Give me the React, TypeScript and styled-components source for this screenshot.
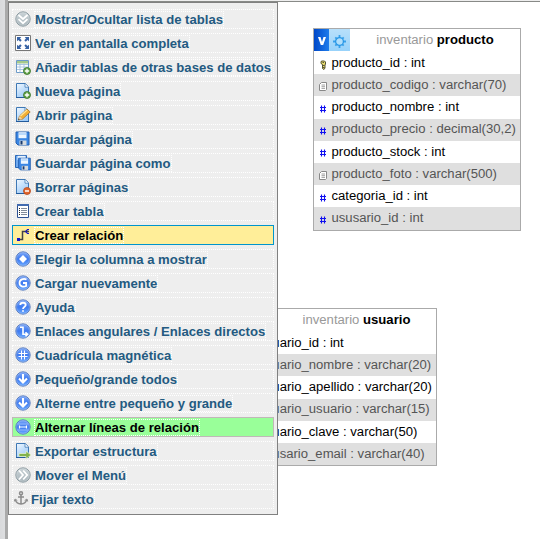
import React from 'react';
import styled, { createGlobalStyle, css } from 'styled-components';

const Global = createGlobalStyle`
  * { box-sizing: border-box; }
  body { margin: 0; background: #fff; overflow: hidden; }
`;

const Page = styled.div`
  display: grid;
  grid-template-columns: 5px 3px 1fr;
  width: 540px;
  height: 539px;
  font-family: "Liberation Sans", Arial, sans-serif;
`;
const NavEdge = styled.div`
  background: linear-gradient(90deg, #d9dadc, #dddee0);
`;
const Resizer = styled.div`
  background: #aaa;
`;
const Canvas = styled.main`
  position: relative;
  overflow: hidden;
  background: #fff;
  border-top: 1px solid #eee;
  box-shadow: inset 0 1px 0 #888a87;
`;
const Menu = styled.nav`
  position: absolute;
  left: 0;
  top: 1px;
  width: 270px;
  height: 513px;
  padding: 5px 3px 0;
  display: flex;
  flex-direction: column;
  gap: 4px;
  background: #eee;
  border: 1px solid #808080;
`;

type Tone = 'plain' | 'hover' | 'active';
const tones = {
  plain: css`border: 1px dotted #fff; color: #235a81;`,
  hover: css`border: 1px solid #0095cc; background: #ffee99; color: #000;`,
  active: css`border: 1px solid #c0b8b8; background: #99ff99; color: #000;`,
};
const Item = styled.a<{ $tone: Tone }>`
  display: flex;
  align-items: center;
  height: 20px;
  flex: none;
  width: 262px;
  padding-left: 2px;
  ${p => tones[p.$tone]}
  &:first-child { margin-top: 1px; }
`;
const IconSlot = styled.span<{ $narrow?: boolean }>`
  display: flex;
  width: ${p => (p.$narrow ? 14 : 16)}px;
  margin-left: ${p => (p.$narrow ? -1 : 0)}px;
  margin-right: ${p => (p.$narrow ? 2 : 3)}px;
  flex: none;
  svg { width: 16px; height: 16px; flex: none; }
`;
const Label = styled.em`
  font-style: normal;
  font-weight: bold;
  font-size: 13.12px;
  line-height: 15px;
  white-space: nowrap;
  border: 1px dotted #fff;
`;

const Table = styled.section<{ $x: number; $y: number; $w: number }>`
  position: absolute;
  left: ${p => p.$x}px;
  top: ${p => p.$y}px;
  width: ${p => p.$w}px;
  border: 1px solid #aaa;
  background: #fff;
  font-size: 13.12px;
`;
const Head = styled.header`
  display: flex;
  height: 23px;
`;
const Toggle = styled.span`
  display: grid;
  place-items: center;
  width: 15px;
  height: 22px;
  padding-top: 1px;
  background: linear-gradient(90deg, #0048c8, #1d7cec);
`;
const Gear = styled.span`
  display: grid;
  place-items: center;
  width: 21px;
  height: 22px;
  padding-top: 3px;
  background: linear-gradient(#b8e0fb, #98d2fa);
`;
const Title = styled.h2`
  flex: 1;
  margin: 0;
  text-align: center;
  font-size: 13.12px;
  font-weight: bold;
  line-height: 22px;
  color: #000;
  white-space: nowrap;
`;
const Db = styled.span`
  font-weight: normal;
  color: #999;
`;
const Row = styled.div<{ $alt: boolean }>`
  display: flex;
  align-items: center;
  height: 22.2px;
  color: ${p => (p.$alt ? '#555' : '#000')};
  background: ${p => (p.$alt ? '#dfdfdf' : '#fff')};
  white-space: nowrap;
  line-height: 20px;
`;
const TypeIcon = styled.span`
  display: flex;
  width: 17.5px;
  flex: none;
  padding: 3px 0 0 4px;
`;
const ColText = styled.span`
  margin-top: -0.4px;
`;

function Ball({ grey, children }: { grey?: boolean; children: React.ReactNode }) {
  return (
    <svg viewBox="0 0 16 16">
      <defs>
        <linearGradient id="ballBlue" x1="0" y1="0" x2="0" y2="1">
          <stop offset="0" stopColor="#7ea8f6" />
          <stop offset="0.5" stopColor="#3d7af0" />
          <stop offset="1" stopColor="#6aa8ff" />
        </linearGradient>
        <linearGradient id="ballGrey" x1="0" y1="0" x2="0" y2="1">
          <stop offset="0" stopColor="#c9d2d6" />
          <stop offset="1" stopColor="#a9b6bc" />
        </linearGradient>
      </defs>
      <circle cx="8" cy="8" r="7.2" fill={grey ? 'url(#ballGrey)' : 'url(#ballBlue)'} stroke={grey ? '#84949b' : '#5478bd'} strokeWidth="0.9" />
      <circle cx="8" cy="8" r="6.4" fill="none" stroke="#fff" strokeOpacity="0.35" strokeWidth="0.6" />
      <g fill="none" stroke="#fff" strokeWidth="1.8">{children}</g>
    </svg>
  );
}

const Sheet = () => (
  <>
    <defs>
      <linearGradient id="paper" x1="0" y1="0" x2="0.6" y2="1">
        <stop offset="0" stopColor="#f0f8ff" />
        <stop offset="1" stopColor="#9dcaf8" />
      </linearGradient>
    </defs>
    <path d="M1.5.5h8.700l3.300 3.300v10.700h-12z" fill="url(#paper)" stroke="#3e78b5" />
    <path d="M10 .8v3.400h3.300" fill="#fff" stroke="#3e78b5" strokeWidth=".8" />
    <path d="M1 14.500h13" stroke="#235b9c" />
  </>
);
const Plus = () => (
  <>
    <circle cx="12" cy="12" r="3.5" fill="#60a145" stroke="#39752a" strokeWidth=".8" />
    <path d="M12 9.8v4.4M9.8 12h4.4" stroke="#fff" strokeWidth="1.3" />
  </>
);
const Floppy = () => (
  <>
    <path d="M1 1h13v13H3L1 12z" fill="#3a86e4" stroke="#2460b0" />
    <path d="M3.500 1.200h8v6h-8z" fill="#edf6ff" />
    <path d="M4 2h7v2H4z" fill="#bcdafa" />
    <path d="M4.500 9.500h7V14h-7z" fill="#d5dade" />
    <path d="M5.500 10h2v3.500h-2z" fill="#173a70" />
  </>
);

const icons: Record<string, React.ReactNode> = {
  down2: <Ball grey><path d="m3.500 4 4.500 4 4.500-4M3.500 8.200l4.500 4 4.500-4" /></Ball>,
  full: (
    <svg viewBox="0 0 16 16">
      <path d="M.5.5h15v15H.5z" fill="#fff" stroke="#777" />
      <path d="M2 2h4.3L5 3.5 6.7 5.2 5.2 6.7 3.5 5 2 6.3zM14 2H9.7L11 3.5 9.3 5.2l1.5 1.5L12.5 5 14 6.3zM2 14h4.3L5 12.5l1.7-1.7-1.5-1.5L3.5 11 2 9.7zM14 14H9.7l1.300-1.500-1.700-1.700 1.500-1.500 1.700 1.700L14 9.700z" fill="#3762a4" />
    </svg>
  ),
  tableAdd: (
    <svg viewBox="0 0 16 16">
      <path d="M1.500 1.500h12v12h-12z" fill="#fff" stroke="#6d9bc8" />
      <path d="M2 2h11v2.500H2z" fill="#a5c98a" />
      <path d="M2 5.500h11M2 8h11M2 10.500h11M5 4.500v9M9 4.500v9" stroke="#a5c2df" strokeWidth=".9" />
      <Plus />
    </svg>
  ),
  pageAdd: <svg viewBox="0 0 16 16"><Sheet /><Plus /></svg>,
  edit: (
    <svg viewBox="0 0 16 16">
      <Sheet />
      <path d="m3.300 13 1.200-4 7.500-7 3.200 3L7.600 12z" fill="#f2af35" stroke="#a7762b" strokeWidth=".8" />
      <path d="m5.500 9 6.600-6" stroke="#ffe497" strokeWidth="1.400" />
      <path d="m3.300 13 1.200-3.900 2.800 2.800z" fill="#eed2a4" />
      <path d="m3 13.200.7-1.800 1.100 1.200z" fill="#333" />
    </svg>
  ),
  save: <svg viewBox="0 0 16 16"><Floppy /></svg>,
  saveAs: (
    <svg viewBox="0 0 16 16">
      <path d="M.5.5h11v12H.5z" fill="#6ea9ef" stroke="#2967b7" />
      <path d="M2.500.8h8v4h-8z" fill="#e7f3ff" />
      <g transform="translate(2.700 2.300) scale(.9)"><Floppy /></g>
    </svg>
  ),
  remove: (
    <svg viewBox="0 0 16 16">
      <Sheet />
      <circle cx="12" cy="12" r="3.5" fill="#e0662e" stroke="#b6471a" strokeWidth=".8" />
      <path d="M10 12h4" stroke="#fff" strokeWidth="1.5" />
    </svg>
  ),
  table: (
    <svg viewBox="0 0 16 16">
      <path d="M2.500 1.500h11v13h-11z" fill="#fff" stroke="#2c5193" />
      <path d="M2 1h12v2H2z" fill="#426bb0" />
      <path d="M4 5.500h1M4 7.500h1M4 9.500h1M4 11.500h1" stroke="#222" />
      <path d="M6 5.500h6M6 7.500h6M6 9.500h6M6 11.500h6" stroke="#818b9a" />
    </svg>
  ),
  relation: (
    <svg viewBox="0 0 16 16">
      <path d="M4 12.500h3.500v-8H14" fill="none" stroke="#444" strokeWidth="1.500" />
      <path d="M14 2.500h-1.500l-2 2 2 2H14" fill="none" stroke="#1414c8" strokeWidth="1.100" />
      <path d="M2 11h3v3H2z" fill="#1414c8" />
    </svg>
  ),
  diamond: <Ball><path d="m8 4 4 4-4 4-4-4z" fill="#fff" stroke="none" /></Ball>,
  reload: <Ball><path d="M11.500 4.500C8.500 3 4.500 4.500 4.500 8s4 4.500 6.700 3V8H8" /></Ball>,
  help: <Ball><path d="M5.300 6c0-3 5.400-3 5.400 0C10.700 7.700 8 7.700 8 10M8 11.300v1.500" /></Ball>,
  angular: <Ball><path d="M5 4.300h3v7h4M10.500 9.300l2 2-2 2" strokeWidth="1.600" /></Ball>,
  grid: <Ball><path d="M6.500 3.500v9M9.500 3.500v9M3.500 6.500h9M3.500 9.500h9" strokeWidth="1.100" /></Ball>,
  down: <Ball><path d="M8 3v8.500M4 7.500l4 4 4-4" strokeWidth="2.100" /></Ball>,
  toggle: <Ball><path d="M2.500 5h11M2.500 11h11" stroke="#a5c5ff" strokeWidth=".8" /><path d="M4 8h8M4.500 6.500v3M11.500 6.500v3" strokeWidth="1.200" /></Ball>,
  exportPage: (
    <svg viewBox="0 0 16 16">
      <Sheet />
      <path d="M4 10.500h7V8l5 4-5 4v-2.500H4z" fill="#82b34b" stroke="#e8f4d9" strokeWidth=".7" />
    </svg>
  ),
  right2: <Ball grey><path d="m4 3.500 4 4.500-4 4.500M8.200 3.500l4 4.500-4 4.500" /></Ball>,
  anchor: (
    <svg viewBox="0 0 16 16" fill="none" stroke="#8c8c8c" strokeWidth="1.500">
      <circle cx="7" cy="2.300" r="1.500" />
      <path d="M7 3.800V13M4 6h6M1.500 9c.5 3 2.500 3.700 5.500 4 3-.3 5-1 5.500-4" />
      <path d="m.3 10.500.7-2.500 2.300 1.500M13.700 10.500l-.7-2.500-2.300 1.500" strokeWidth="1" />
    </svg>
  ),
};

const items: { icon: string; text: string; tone?: Tone }[] = [
  { icon: 'down2', text: 'Mostrar/Ocultar lista de tablas' },
  { icon: 'full', text: 'Ver en pantalla completa' },
  { icon: 'tableAdd', text: 'Añadir tablas de otras bases de datos' },
  { icon: 'pageAdd', text: 'Nueva página' },
  { icon: 'edit', text: 'Abrir página' },
  { icon: 'save', text: 'Guardar página' },
  { icon: 'saveAs', text: 'Guardar página como' },
  { icon: 'remove', text: 'Borrar páginas' },
  { icon: 'table', text: 'Crear tabla' },
  { icon: 'relation', text: 'Crear relación', tone: 'hover' },
  { icon: 'diamond', text: 'Elegir la columna a mostrar' },
  { icon: 'reload', text: 'Cargar nuevamente' },
  { icon: 'help', text: 'Ayuda' },
  { icon: 'angular', text: 'Enlaces angulares / Enlaces directos' },
  { icon: 'grid', text: 'Cuadrícula magnética' },
  { icon: 'down', text: 'Pequeño/grande todos' },
  { icon: 'down', text: 'Alterne entre pequeño y grande' },
  { icon: 'toggle', text: 'Alternar líneas de relación', tone: 'active' },
  { icon: 'exportPage', text: 'Exportar estructura' },
  { icon: 'right2', text: 'Mover el Menú' },
  { icon: 'anchor', text: 'Fijar texto' },
];

type Kind = 'key' | 'text' | 'num';
const kindIcons: Record<Kind, React.ReactNode> = {
  key: (
    <svg width="10" height="10" viewBox="0 0 10 10">
      <path d="M3.500 1h3l1 1v2L7 5v3L6 9.500 4.500 8.500v-4L3 3.500V2z" fill="#e5d96c" stroke="#444424" strokeWidth=".9" />
      <path d="M4.500 2.500H6M5 5.500h1.500M5 7.500h1.500" stroke="#333" strokeWidth=".8" />
    </svg>
  ),
  text: (
    <svg width="10" height="10" viewBox="0 0 10 10">
      <path d="M3.500.5h5v7l-1 1h-6v-6z" fill="#fff" stroke="#888" />
      <path d="M3.500 3h3.500M3.500 4.700h3.500M3.500 6.400h3.500" stroke="#888" strokeWidth=".8" />
    </svg>
  ),
  num: (
    <svg width="10" height="10" viewBox="0 0 10 10">
      <path d="M3.500 1.500v7M6.500 1.500v7M2 3.500h6M2 6.500h6" stroke="#1010f0" fill="none" strokeWidth="1.100" />
    </svg>
  ),
};

const producto: [Kind, string][] = [
  ['key', 'producto_id : int'],
  ['text', 'producto_codigo : varchar(70)'],
  ['num', 'producto_nombre : int'],
  ['num', 'producto_precio : decimal(30,2)'],
  ['num', 'producto_stock : int'],
  ['text', 'producto_foto : varchar(500)'],
  ['num', 'categoria_id : int'],
  ['num', 'ususario_id : int'],
];
const usuario: [Kind, string][] = [
  ['key', 'usuario_id : int'],
  ['text', 'usuario_nombre : varchar(20)'],
  ['text', 'usuario_apellido : varchar(20)'],
  ['text', 'usuario_usuario : varchar(15)'],
  ['text', 'usuario_clave : varchar(50)'],
  ['text', 'ususario_email : varchar(40)'],
];

function DbTable({ name, rows, x, y, w }: { name: string; rows: [Kind, string][]; x: number; y: number; w: number }) {
  return (
    <Table $x={x} $y={y} $w={w}>
      <Head>
        <Toggle>
          <svg width="8" height="8" viewBox="0 0 8 8"><path d="M0 0h2.500L4 5l1.500-5H8L5.200 8H2.800z" fill="#fff" /></svg>
        </Toggle>
        <Gear>
          <svg width="13" height="13" viewBox="0 0 13 13">
            <path d="M6.500 0v13M0 6.500h13M2.300 2.300l8.400 8.400M10.700 2.300l-8.400 8.400" stroke="#38a0ea" strokeWidth="1.800" />
            <circle cx="6.500" cy="6.500" r="3.900" fill="#b0defb" stroke="#2897e6" strokeWidth="1.300" />
          </svg>
        </Gear>
        <Title><Db>inventario</Db> {name}</Title>
      </Head>
      {rows.map(([kind, text], i) => (
        <Row key={text} $alt={i % 2 === 1}>
          <TypeIcon>{kindIcons[kind]}</TypeIcon>
          <ColText>{text}</ColText>
        </Row>
      ))}
    </Table>
  );
}

export default function App() {
  return (
    <>
      <Global />
      <Page>
        <NavEdge />
        <Resizer />
        <Canvas>
          <DbTable name="producto" rows={producto} x={305} y={27} w={208} />
          <DbTable name="usuario" rows={usuario} x={232} y={307} w={197} />
          <Menu>
            {items.map(({ icon, text, tone = 'plain' }) => (
              <Item key={text} $tone={tone}>
                <IconSlot $narrow={icon === 'anchor'}>{icons[icon]}</IconSlot>
                <Label>{text}</Label>
              </Item>
            ))}
          </Menu>
        </Canvas>
      </Page>
    </>
  );
}
